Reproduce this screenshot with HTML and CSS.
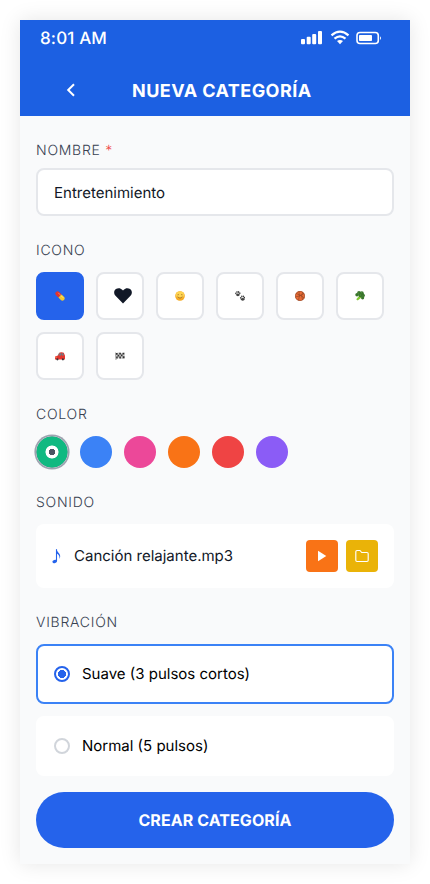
FILE: index.html
```html
<!DOCTYPE html>
<html lang="es">
<head>
<meta charset="utf-8">
<title>Nueva categoría</title>
<link rel="stylesheet" href="styles.css">
</head>
<body>
<main class="phone">
  <header class="header">
    <div class="status">
      <span class="time">8:01 AM</span>
      <svg class="status-icons" width="82" height="16" viewBox="0 0 82 16" fill="#fff">
        <rect x="1" y="10" width="4" height="5.2" rx="1"/>
        <rect x="6.7" y="7.8" width="4" height="7.4" rx="1"/>
        <rect x="12.2" y="5" width="4" height="10.2" rx="1"/>
        <rect x="18" y="2" width="4" height="13.2" rx="1"/>
        <g fill="none" stroke="#fff" stroke-width="2.3">
          <path d="M31.5 6.3Q40 -1 48.500 6.300"/>
          <path d="M34.500 9.700Q40 5.100 45.500 9.700"/>
        </g>
        <path d="M37 12.100Q40 9.700 43 12.100L40 15.200Z"/>
        <rect x="57" y="3.500" width="21.300" height="11" rx="3" fill="none" stroke="#fff" stroke-width="1.600"/>
        <rect x="59" y="6" width="13" height="6" rx=".8"/>
        <path d="M80 7.200Q82 9 80 11Z"/>
      </svg>
    </div>
    <div class="titlebar">
      <svg class="back" width="16" height="16" viewBox="0 0 16 16" fill="none" stroke="#fff" stroke-width="2"><path d="M11 2.200L5.200 8L11 13.800"/></svg>
      <h1>NUEVA CATEGORÍA</h1>
    </div>
  </header>

  <form class="content">
    <label class="label" for="name">NOMBRE <span class="required">*</span></label>
    <input class="field" id="name" type="text" value="Entretenimiento">

    <h2 class="label">ICONO</h2>
    <div class="icons">
      <div class="tile selected">
        <svg class="glyph" viewBox="0 0 10 10"><g transform="rotate(45 5 5)"><path d="M5 2.800H1.600A2.200 2.200 0 0 0 1.600 7.200H5Z" fill="#e5342b"/><path d="M5 2.800H8.400A2.200 2.200 0 0 1 8.400 7.200H5Z" fill="#f4c92c"/><path d="M1.500 4H4.500" stroke="#ff988b" stroke-width=".7"/><path d="M5.500 4H8.500" stroke="#fff09a" stroke-width=".7"/></g></svg>
      </div>
      <div class="tile">
        <svg class="heart" width="18" height="16" viewBox="0 0 18 16" fill="#111827"><path d="M9 15.400L1.500 7.800C-.5 5.700-.2 2.500 1.900 1.100C4-.4 6.700 0 8.200 1.700L9 2.500L9.800 1.700C11.300 0 14-.4 16.100 1.100C18.200 2.500 18.500 5.700 16.500 7.800Z"/></svg>
      </div>
      <div class="tile">
        <svg class="glyph" viewBox="0 0 10 10"><circle cx="5" cy="5" r="4.800" fill="#f6ac25"/><ellipse cx="5" cy="3.800" rx="4" ry="3.200" fill="#ffd653"/><g fill="none" stroke="#8c5519" stroke-width=".7"><path d="M2.500 3.900Q3.200 3.200 3.900 3.900M6.100 3.900Q6.800 3.200 7.500 3.900M2.400 5.800Q5 8.500 7.600 5.800"/></g></svg>
      </div>
      <div class="tile">
        <svg class="glyph" viewBox="0 0 10 10" fill="#434343"><g id="paw"><ellipse cx="2.900" cy="3.800" rx="1.800" ry="1.400"/><ellipse cx=".8" cy="2.300" rx=".7" ry=".9"/><ellipse cx="2" cy="1" rx=".7" ry=".9"/><ellipse cx="3.600" cy="1" rx=".7" ry=".9"/><ellipse cx="4.800" cy="2.200" rx=".7" ry=".9"/></g><use href="#paw" x="4.800" y="4.500"/></svg>
      </div>
      <div class="tile">
        <svg class="glyph" viewBox="0 0 10 10"><circle cx="5" cy="5" r="4.900" fill="#e96c35"/><g fill="none" stroke="#70351f" stroke-width=".45"><circle cx="5" cy="5" r="4.700"/><path d="M1.200 2.500Q5.500 3.800 9.300 7M4 .5Q5 5 3.500 9.400M7.700 1.200Q5.800 4 7.500 8.700M.4 6Q4 5.800 9 2.500"/></g></svg>
      </div>
      <div class="tile">
        <svg class="glyph" viewBox="0 0 10 10"><path d="M4.500 4.500L1.200 8.200L2.700 9.500L7.500 5.800Z" fill="#83ca32"/><g fill="#39752c"><circle cx="2" cy="3.800" r="1.700"/><circle cx="4" cy="2" r="1.900"/><circle cx="6.800" cy="2.300" r="2"/><circle cx="8.200" cy="4.500" r="1.700"/><circle cx="7.600" cy="6.800" r="1.600"/><circle cx="5.500" cy="4.300" r="2"/></g><path d="M3 2.200H4M6 1.700H7M5 4H6M7.500 5H8.500" stroke="#61a14a" stroke-width=".7"/></svg>
      </div>
      <div class="tile">
        <svg class="glyph" viewBox="0 0 10 10"><path d="M0 5.400L3 4.500L4.700 1.600Q7 .6 8.800 1.800L10 4.800V8.400H0Z" fill="#e5352d"/><path d="M3.800 4.500L5.100 2.300H6.300V4.500ZM6.900 2.300H8.100L8.900 4.500H6.900Z" fill="#62818e"/><path d="M3 4.400L4.500 1.800" stroke="#777" stroke-width=".7"/><circle cx="2.400" cy="8.300" r="1.100" fill="#373a40"/><circle cx="7.900" cy="8.300" r="1.100" fill="#373a40"/><path d="M.5 6.200H1.500" stroke="#ffe49c" stroke-width=".8"/></svg>
      </div>
      <div class="tile">
        <svg class="glyph" viewBox="0 0 10 10"><path d="M.4 1.500L1 9" stroke="#777" stroke-width=".7"/><path d="M.8 2Q3 1 5.200 1.800T9.500 1.500L9.800 7.500Q7.500 8.300 5.400 7.600T1.200 7.900Z" fill="#ccc"/><path d="M1 2H2.600V3.800H1ZM4.200 1.700H5.900V3.500H4.200ZM7.500 1.800H9.300V3.500H7.500ZM2.600 3.800H4.200V5.500H2.600ZM5.900 3.500H7.500V5.300H5.900ZM1.200 5.500H2.700V7.400H1.200ZM4.300 5.500H5.900V7.400H4.300ZM7.700 5.300H9.500V7.200H7.700Z" fill="#303030"/></svg>
      </div>
    </div>

    <h2 class="label">COLOR</h2>
    <div class="colors">
      <span class="swatch green"></span>
      <span class="swatch blue"></span>
      <span class="swatch pink"></span>
      <span class="swatch orange"></span>
      <span class="swatch red"></span>
      <span class="swatch purple"></span>
    </div>

    <h2 class="label">SONIDO</h2>
    <div class="sound">
      <svg class="note" width="10" height="16" viewBox="0 0 10 16"><ellipse cx="2.700" cy="13.400" rx="2.300" ry="1.600" transform="rotate(-20 2.700 13.400)" fill="#2563eb"/><path d="M4.500 13.400V1.200" stroke="#2563eb" stroke-width="1.100"/><path d="M4.500 1.200C5.200 4.800 10.300 5.800 7.200 11.300C8.200 7.800 6.500 6.300 4.500 5.400Z" fill="#2563eb"/></svg>
      <span class="song">Canción relajante.mp3</span>
      <button class="action play" type="button" aria-label="Reproducir"><svg width="16" height="16" viewBox="0 0 16 16"><path d="M4 2.700L12.300 8L4 13.300Z" fill="#fff"/></svg></button>
      <button class="action folder" type="button" aria-label="Elegir archivo"><svg width="16" height="16" viewBox="0 0 16 16" fill="none" stroke="#fff" stroke-width="1.150" stroke-linejoin="round"><path d="M1.800 3.700Q1.800 2.500 3 2.500H6L7.700 4.500H13Q14.200 4.500 14.200 5.700V12.300Q14.200 13.500 13 13.500H3Q1.800 13.500 1.800 12.300Z"/></svg></button>
    </div>

    <h2 class="label">VIBRACIÓN</h2>
    <div class="option active"><span class="radio"></span><span>Suave (3 pulsos cortos)</span></div>
    <div class="option"><span class="radio"></span><span>Normal (5 pulsos)</span></div>

    <button class="submit" type="button">CREAR CATEGORÍA</button>
  </form>
</main>
</body>
</html>
```
FILE: styles.css
```css
* { box-sizing: border-box; }
body {
  margin: 0;
  padding: 20px;
  background: #fff;
  font-family: Inter, "Liberation Sans", sans-serif;
  text-rendering: geometricPrecision;
}
.phone {
  width: 390px;
  height: 844px;
  background: #f9fafb;
  box-shadow: 0 0 20px rgba(0, 0, 0, .1);
}
.header {
  height: 96px;
  background: #1c60e2;
  color: #fff;
}
.status {
  display: flex;
  justify-content: space-between;
  height: 44px;
  padding: 8px 28px 0 20px;
}
.time {
  padding-top: 1px;
  font-size: 17px;
  font-weight: 500;
  line-height: 20px;
  letter-spacing: .15px;
}
.status-icons { margin-top: 1px; }
.titlebar {
  display: flex;
  align-items: center;
  height: 52px;
  padding: 0 43px;
}
h1 {
  margin: 3px 0 0 53px;
  font-size: 18px;
  font-weight: 700;
  line-height: 24px;
  letter-spacing: .45px;
  white-space: nowrap;
}
.content { padding: 24px 16px 16px; }
.label {
  display: block;
  margin: 24px 0 7px;
  padding-top: 1px;
  color: #374151;
  font-size: 14px;
  font-weight: 300;
  line-height: 20px;
  letter-spacing: .75px;
}
.label:first-child { margin-top: 0; }
.required { color: #ef4444; }
.field {
  display: block;
  width: 100%;
  height: 48px;
  padding: 1px 16px 0;
  border: 2px solid #e5e7eb;
  border-radius: 8px;
  background: #fff;
  color: #111827;
  font: 15px/20px Inter, "Liberation Sans", sans-serif;
  text-rendering: inherit;
}
.icons {
  display: flex;
  flex-wrap: wrap;
  gap: 12px;
  margin-top: 11px;
}
.tile {
  display: flex;
  align-items: center;
  justify-content: center;
  width: 48px;
  height: 48px;
  border: 2px solid #e5e7eb;
  border-radius: 8px;
  background: #fff;
}
.tile.selected {
  border-color: #2563eb;
  background: #2563eb;
}
.glyph { width: 10px; height: 10px; }
.heart { margin-left: 6px; }
.colors {
  display: flex;
  gap: 12px;
  margin-top: 11px;
}
.swatch {
  width: 32px;
  height: 32px;
  border-radius: 50%;
}
.green {
  background: radial-gradient(circle, #4b5563 0 3px, #fff 3.500px 6.200px, #10b981 6.800px 15.200px, #9ca3af 15.800px);
  box-shadow: 0 0 0 1.600px #9ca3af;
}
.blue { background: #3b82f6; }
.pink { background: #ec4899; }
.orange { background: #f97316; }
.red { background: #ef4444; }
.purple { background: #8b5cf6; }
.sound {
  display: flex;
  align-items: center;
  height: 64px;
  margin-top: 11px;
  padding: 0 16px;
  border-radius: 8px;
  background: #fff;
}
.song {
  margin: 0 auto 0 12px;
  color: #111827;
  font-size: 15px;
  line-height: 22px;
}
.action {
  display: flex;
  align-items: center;
  justify-content: center;
  width: 32px;
  height: 32px;
  padding: 0;
  border: 0;
  border-radius: 4px;
}
.play { background: #f97316; }
.folder {
  margin-left: 8px;
  background: #eab308;
}
.option {
  display: flex;
  align-items: center;
  gap: 12px;
  height: 60px;
  margin-top: 12px;
  padding: 0 16px;
  border: 2px solid #fff;
  border-radius: 8px;
  background: #fff;
  color: #000;
  font-size: 15px;
  line-height: 20px;
}
.label + .option { margin-top: 11px; }
.option.active { border-color: #3b82f6; }
.radio {
  width: 16px;
  height: 16px;
  border: 2px solid #d1d5db;
  border-radius: 50%;
}
.active .radio {
  border-color: #2563eb;
  background: radial-gradient(circle, #2563eb 3.800px, #fff 4.300px);
}
.submit {
  display: block;
  width: 100%;
  height: 56px;
  margin-top: 16px;
  padding: 0;
  border: 0;
  border-radius: 28px;
  background: #2563eb;
  color: #fff;
  font: 700 16px/20px Inter, "Liberation Sans", sans-serif;
  letter-spacing: .08px;
  text-rendering: inherit;
}
```
